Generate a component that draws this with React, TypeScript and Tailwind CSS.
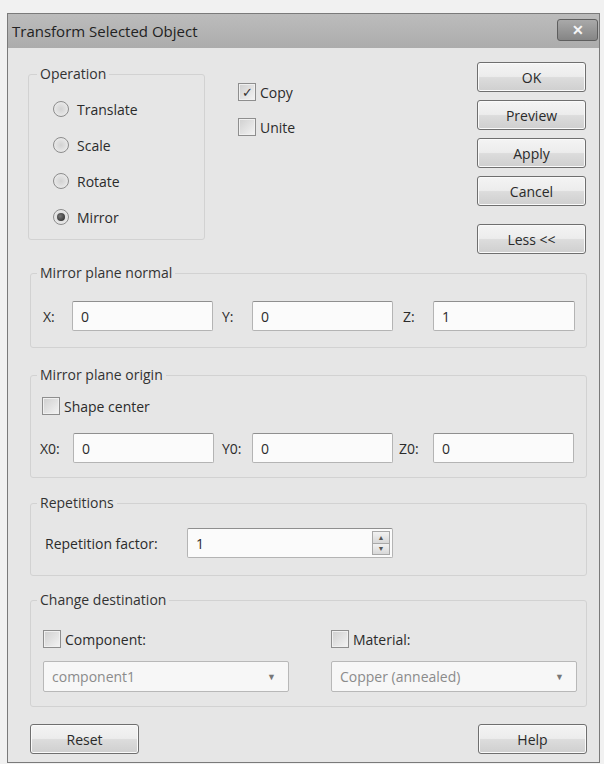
import type { ReactNode } from "react";

const font = "font-['Open_Sans','Noto_Sans',sans-serif]";

const Btn = ({ children, className = "" }: { children: ReactNode; className?: string }) => (
  <button
    type="button"
    className={`flex h-[30px] w-[109px] items-center justify-center rounded-[3px] border border-[#6f6f6f] bg-[linear-gradient(#f4f4f4_0%,#ececec_48%,#dcdcdc_52%,#cfcfcf_100%)] text-[14px] text-[#2a2a2a] shadow-[inset_0_0_0_1px_#fafafa] ${className}`}
  >
    {children}
  </button>
);

const Radio = ({ label, checked = false }: { label: string; checked?: boolean }) => (
  <div className="flex h-[36px] items-center gap-[8px]">
    <span className="flex h-[16px] w-[16px] items-center justify-center rounded-full border border-[#8c8c8c] bg-[radial-gradient(circle,#d2d2d2,#f2f2f2)]">
      {checked && <span className="h-[8px] w-[8px] rounded-full bg-[radial-gradient(circle_at_40%_40%,#777,#222)]" />}
    </span>
    <span>{label}</span>
  </div>
);

const Check = ({ label, checked = false, className = "" }: { label: string; checked?: boolean; className?: string }) => (
  <div className={`flex h-[20px] items-center gap-[4px] ${className}`}>
    <span className="flex h-[18px] w-[18px] items-center justify-center border border-[#8e8e8e] bg-[linear-gradient(135deg,#cfcfcf,#f4f4f4)] shadow-[inset_0_0_0_1px_#f0f0f0]">
      {checked && <span className="text-[13px] leading-none text-[#333]">✓</span>}
    </span>
    <span>{label}</span>
  </div>
);

const Field = ({ value, className = "" }: { value: string; className?: string }) => (
  <div
    className={`flex h-[30px] items-center rounded-[2px] border border-[#b4b4b4] border-t-[#8f8f8f] bg-[#fbfbfb] pl-[8px] ${className}`}
  >
    {value}
  </div>
);

// legendClass pulls the caption back against the fieldset padding
const Group = ({
  title,
  children,
  className = "",
  legendClass = "",
}: {
  title: string;
  children: ReactNode;
  className?: string;
  legendClass?: string;
}) => (
  <fieldset className={`rounded-[3px] border border-[#d2d2d2] ${className}`}>
    <legend className={`px-[3px] text-[14px] leading-[20px] text-[#333] ${legendClass}`}>{title}</legend>
    {children}
  </fieldset>
);

const Combo = ({ value }: { value: string }) => (
  <div className="flex h-[31px] w-[246px] items-center justify-between rounded-[2px] border border-[#b8b8b8] bg-[#f7f7f7] pl-[8px] pr-[12px] text-[#8b8b8b]">
    <span>{value}</span>
    <span className="text-[9px] text-[#777]">▼</span>
  </div>
);

export default function App() {
  return (
    <div className={`h-[764px] w-[604px] overflow-hidden bg-[#f1f1f1] pl-[7px] pt-[13px] ${font} text-[14px] text-[#2b2b2b]`}>
      <div className="w-[593px] border border-[#7a7a7a] bg-[#e6e6e6]">
        {/* title bar */}
        <div className="flex h-[34px] items-center justify-between bg-[linear-gradient(#bcbcbc,#acacac)] pl-[4px] pr-[1px]">
          <span className="text-[15px] text-[#222]">Transform Selected Object</span>
          <span className="mb-[3px] flex h-[22px] w-[41px] items-center justify-center rounded-[3px] border border-[#5e5e5e] bg-[linear-gradient(#a9a9a9,#858585)] text-[14px] font-bold leading-none text-[#f6f6f6]">
            ✕
          </span>
        </div>

        {/* operation + actions */}
        <div className="flex h-[207px] items-start pl-[20px] pr-[13px]">
          <fieldset className="mt-[16px] w-[177px] rounded-[3px] border border-[#d2d2d2] pb-[4px] pl-[24px] pt-[7px]">
            <legend className="-ml-[16px] px-[3px] leading-[20px] text-[#333]">Operation</legend>
            <Radio label="Translate" />
            <Radio label="Scale" />
            <Radio label="Rotate" />
            <Radio label="Mirror" checked />
          </fieldset>

          <div className="ml-[33px] mt-[34px] flex flex-col gap-[15px]">
            <Check label="Copy" checked />
            <Check label="Unite" />
          </div>

          <div className="ml-auto mt-[14px] flex flex-col gap-[8px]">
            <Btn>OK</Btn>
            <Btn>Preview</Btn>
            <Btn>Apply</Btn>
            <Btn>Cancel</Btn>
            <Btn className="mt-[10px]">Less &lt;&lt;</Btn>
          </div>
        </div>

        <div className="ml-[22px] mr-[12px] flex flex-col">
          <Group title="Mirror plane normal" className="mt-[8px] pb-[16px] pl-[12px] pt-[18px]" legendClass="-ml-[6px]">
            <div className="flex items-center">
              <span className="w-[29px]">X:</span>
              <Field value="0" className="w-[141px]" />
              <span className="ml-[9px] w-[30px]">Y:</span>
              <Field value="0" className="w-[141px]" />
              <span className="ml-[10px] w-[30px]">Z:</span>
              <Field value="1" className="w-[142px]" />
            </div>
          </Group>

          <Group title="Mirror plane origin" className="mt-[17px] pb-[14px] pl-[9px] pt-[11px]" legendClass="-ml-[3px]">
            <Check label="Shape center" className="ml-[2px]" />
            <div className="mt-[17px] flex items-center">
              <span className="w-[33px]">X0:</span>
              <Field value="0" className="w-[141px]" />
              <span className="ml-[8px] w-[30px]">Y0:</span>
              <Field value="0" className="w-[141px]" />
              <span className="ml-[6px] w-[34px]">Z0:</span>
              <Field value="0" className="w-[141px]" />
            </div>
          </Group>

          <Group title="Repetitions" className="mt-[15px] pb-[17px] pl-[14px] pt-[15px]" legendClass="-ml-[8px]">
            <div className="flex items-center">
              <span className="w-[142px]">Repetition factor:</span>
              <div className="flex h-[30px] w-[206px] rounded-[2px] border border-[#b4b4b4] border-t-[#8f8f8f] bg-[#fbfbfb]">
                <span className="flex flex-1 items-center pl-[8px]">1</span>
                <div className="my-[2px] mr-[2px] flex w-[18px] flex-col border border-[#a8a8a8]">
                  <span className="flex flex-1 items-center justify-center border-b border-[#a8a8a8] bg-[linear-gradient(#f2f2f2,#d8d8d8)] text-[7px] leading-none text-[#555]">
                    ▲
                  </span>
                  <span className="flex flex-1 items-center justify-center bg-[linear-gradient(#f2f2f2,#d8d8d8)] text-[7px] leading-none text-[#555]">
                    ▼
                  </span>
                </div>
              </div>
            </div>
          </Group>

          <Group title="Change destination" className="mt-[14px] pb-[14px] pl-[12px] pt-[19px]" legendClass="-ml-[6px]">
            <div className="flex gap-[42px]">
              <div className="flex w-[246px] flex-col gap-[12px]">
                <Check label="Component:" />
                <Combo value="component1" />
              </div>
              <div className="flex w-[246px] flex-col gap-[12px]">
                <Check label="Material:" />
                <Combo value="Copper (annealed)" />
              </div>
            </div>
          </Group>

          <div className="mb-[8px] mt-[17px] flex justify-between">
            <Btn>Reset</Btn>
            <Btn>Help</Btn>
          </div>
        </div>
      </div>
    </div>
  );
}
